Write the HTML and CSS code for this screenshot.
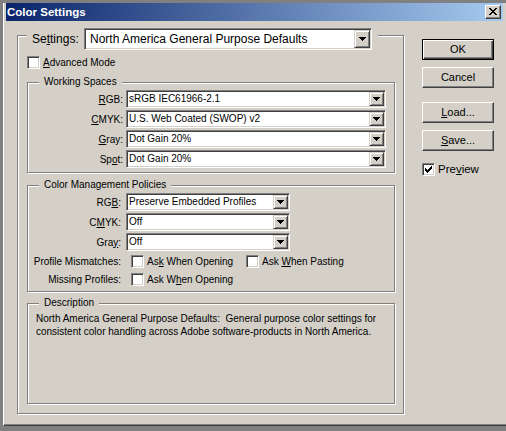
FILE: index.html
```html
<!DOCTYPE html>
<html>
<head>
<meta charset="utf-8">
<title>Color Settings</title>
<link rel="stylesheet" href="styles.css">
</head>
<body>
<div class="window">
  <div class="titlebar">
    <span class="title">Color Settings</span>
    <span class="close"><svg width="8" height="7" viewBox="0 0 8 7" shape-rendering="crispEdges"><path d="M0 0h2v1h-2zM6 0h2v1h-2zM1 1h2v1h-2zM5 1h2v1h-2zM2 2h4v1h-4zM3 3h2v1h-2zM2 4h4v1h-4zM1 5h2v1h-2zM5 5h2v1h-2zM0 6h2v1h-2zM6 6h2v1h-2z" fill="#000"/></svg></span>
  </div>
  <div class="client">
    <div class="group main">
      <div class="legend settings-legend">
        <span class="big-label">Se<u>t</u>tings:</span>
        <div class="combo combo-big">
          <span class="val">North America General Purpose Defaults</span>
          <span class="arrow"><svg width="7" height="4" viewBox="0 0 7 4" shape-rendering="crispEdges"><path d="M0 0h7v1h-7zM1 1h5v1h-5zM2 2h3v1h-3zM3 3h1v1h-1z" fill="#000"/></svg></span>
        </div>
      </div>

      <div class="check-row adv">
        <span class="cb"></span>
        <span class="cb-text"><u>A</u>dvanced Mode</span>
      </div>

      <div class="group ws">
        <div class="legend">Working Spaces</div>
        <div class="row">
          <span class="lbl"><u>R</u>GB:</span>
          <div class="combo"><span class="val">sRGB IEC61966-2.1</span><span class="arrow"><svg width="7" height="4" viewBox="0 0 7 4" shape-rendering="crispEdges"><path d="M0 0h7v1h-7zM1 1h5v1h-5zM2 2h3v1h-3zM3 3h1v1h-1z" fill="#000"/></svg></span></div>
        </div>
        <div class="row">
          <span class="lbl"><u>C</u>MYK:</span>
          <div class="combo"><span class="val">U.S. Web Coated (SWOP) v2</span><span class="arrow"><svg width="7" height="4" viewBox="0 0 7 4" shape-rendering="crispEdges"><path d="M0 0h7v1h-7zM1 1h5v1h-5zM2 2h3v1h-3zM3 3h1v1h-1z" fill="#000"/></svg></span></div>
        </div>
        <div class="row">
          <span class="lbl"><u>G</u>ray:</span>
          <div class="combo"><span class="val">Dot Gain 20%</span><span class="arrow"><svg width="7" height="4" viewBox="0 0 7 4" shape-rendering="crispEdges"><path d="M0 0h7v1h-7zM1 1h5v1h-5zM2 2h3v1h-3zM3 3h1v1h-1z" fill="#000"/></svg></span></div>
        </div>
        <div class="row">
          <span class="lbl">Sp<u>o</u>t:</span>
          <div class="combo"><span class="val">Dot Gain 20%</span><span class="arrow"><svg width="7" height="4" viewBox="0 0 7 4" shape-rendering="crispEdges"><path d="M0 0h7v1h-7zM1 1h5v1h-5zM2 2h3v1h-3zM3 3h1v1h-1z" fill="#000"/></svg></span></div>
        </div>
      </div>

      <div class="group cmp">
        <div class="legend">Color Management Policies</div>
        <div class="row">
          <span class="lbl">RG<u>B</u>:</span>
          <div class="combo"><span class="val">Preserve Embedded Profiles</span><span class="arrow"><svg width="7" height="4" viewBox="0 0 7 4" shape-rendering="crispEdges"><path d="M0 0h7v1h-7zM1 1h5v1h-5zM2 2h3v1h-3zM3 3h1v1h-1z" fill="#000"/></svg></span></div>
        </div>
        <div class="row">
          <span class="lbl">C<u>M</u>YK:</span>
          <div class="combo"><span class="val">Off</span><span class="arrow"><svg width="7" height="4" viewBox="0 0 7 4" shape-rendering="crispEdges"><path d="M0 0h7v1h-7zM1 1h5v1h-5zM2 2h3v1h-3zM3 3h1v1h-1z" fill="#000"/></svg></span></div>
        </div>
        <div class="row">
          <span class="lbl">Gra<u>y</u>:</span>
          <div class="combo"><span class="val">Off</span><span class="arrow"><svg width="7" height="4" viewBox="0 0 7 4" shape-rendering="crispEdges"><path d="M0 0h7v1h-7zM1 1h5v1h-5zM2 2h3v1h-3zM3 3h1v1h-1z" fill="#000"/></svg></span></div>
        </div>
        <div class="row check-line first-check">
          <span class="lbl">Profile Mismatches:</span>
          <span class="opt opt-first"><span class="cb"></span><span class="cb-text">As<u>k</u> When Opening</span></span>
          <span class="opt"><span class="cb"></span><span class="cb-text">Ask <u>W</u>hen Pasting</span></span>
        </div>
        <div class="row check-line">
          <span class="lbl">Missing Profiles:</span>
          <span class="opt"><span class="cb"></span><span class="cb-text">Ask W<u>h</u>en Opening</span></span>
        </div>
      </div>

      <div class="group desc">
        <div class="legend">Description</div>
        <p class="desc-text">North America General Purpose Defaults:&nbsp; General purpose color settings for<br>consistent color handling across Adobe software-products in North America.</p>
      </div>
    </div>

    <div class="side">
      <div class="btn btn-default">OK</div>
      <div class="btn btn-cancel">Cancel</div>
      <div class="btn btn-load"><span><u>L</u>oad...</span></div>
      <div class="btn btn-save"><span><u>S</u>ave...</span></div>
      <div class="check-row preview">
        <span class="cb checked"><svg width="7" height="7" viewBox="0 0 7 7" shape-rendering="crispEdges"><path d="M6 0h1v1h-1zM5 1h2v1h-2zM0 2h1v1h-1zM4 2h3v1h-3zM0 3h2v1h-2zM3 3h3v1h-3zM0 4h5v1h-5zM1 5h3v1h-3zM2 6h1v1h-1z" fill="#000"/></svg></span>
        <span class="cb-text big-text">Pre<u>v</u>iew</span>
      </div>
    </div>
  </div>
</div>
</body>
</html>
```

FILE: styles.css
```css
html, body {
  margin: 0;
  padding: 0;
}

body {
  background: #808080;
  font-family: "Liberation Sans", Arial, sans-serif;
  font-size: 10px;
  color: #000;
  width: 506px;
  height: 431px;
  overflow: hidden;
}

u {
  text-decoration: underline;
  text-underline-offset: 1px;
}

.window {
  box-sizing: border-box;
  margin-left: 3px;
  width: 503px;
  height: 423px;
  background: #d4d0c8;
  border-left: 1px solid #ffffff;
  border-bottom: 1px solid #404040;
  box-shadow: inset 0 -1px 0 #808080;
}

.titlebar {
  box-sizing: border-box;
  margin: 3px 3px 0 2px;
  height: 18px;
  background: linear-gradient(to right, #0a246a, #a6caf0);
  display: flex;
  align-items: center;
  justify-content: space-between;
  padding: 0 2px 0 1px;
}

.title {
  color: #ffffff;
  font-weight: bold;
  font-size: 11.5px;
  line-height: 14px;
}

.close {
  box-sizing: border-box;
  width: 16px;
  height: 14px;
  background: #d4d0c8;
  border: 1px solid;
  border-color: #ffffff #404040 #404040 #ffffff;
  box-shadow: inset -1px -1px 0 #808080;
  display: flex;
  align-items: center;
  justify-content: center;
  padding: 0 1px 1px 0;
}

.close svg {
  display: block;
}

.client {
  display: flex;
  align-items: flex-start;
  padding: 14px 0 0 13px;
}

/* etched group boxes */
.group {
  position: relative;
  box-sizing: border-box;
  border: 1px solid #808080;
  box-shadow: inset 1px 1px 0 #ffffff, 1px 1px 0 #ffffff;
}

.legend {
  position: absolute;
  top: -7px;
  left: 11px;
  padding: 0 5px;
  line-height: 12px;
  background: #d4d0c8;
  white-space: nowrap;
}

.main {
  width: 387px;
  height: 379px;
  padding: 20px 8px 9px 9px;
  display: flex;
  flex-direction: column;
}

.settings-legend {
  top: -8px;
  left: 9px;
  padding: 0 6px 0 5px;
  display: flex;
  align-items: center;
  height: 22px;
}

.big-label {
  font-size: 12px;
  width: 52px;
  line-height: 14px;
}

/* combo boxes */
.combo {
  box-sizing: border-box;
  height: 18px;
  background: #ffffff;
  border: 1px solid;
  border-color: #808080 #ffffff #ffffff #808080;
  box-shadow: inset 1px 1px 0 #404040, inset -1px -1px 0 #d4d0c8;
  padding: 1px;
  display: flex;
  align-items: stretch;
}

.combo .val {
  flex: 1;
  padding-left: 1px;
  line-height: 14px;
  white-space: nowrap;
  overflow: hidden;
}

.combo .arrow {
  box-sizing: border-box;
  width: 15px;
  background: #d4d0c8;
  border: 1px solid;
  border-color: #d4d0c8 #404040 #404040 #d4d0c8;
  box-shadow: inset 1px 1px 0 #ffffff, inset -1px -1px 0 #808080;
  display: flex;
  align-items: center;
  justify-content: center;
}

.combo .arrow svg {
  display: block;
}

.combo-big {
  width: 288px;
  height: 22px;
  font-size: 12px;
}

.combo-big .val {
  padding-left: 4px;
  line-height: 18px;
}

.combo-big .arrow {
  width: 16px;
}

/* checkboxes */
.check-row {
  display: flex;
  align-items: center;
  height: 13px;
}

.cb {
  box-sizing: border-box;
  flex: none;
  width: 13px;
  height: 13px;
  background: #ffffff;
  border: 1px solid;
  border-color: #808080 #ffffff #ffffff #808080;
  box-shadow: inset 1px 1px 0 #404040, inset -1px -1px 0 #d4d0c8;
  display: flex;
  padding: 2px 0 0 2px;
}

.cb svg {
  display: block;
}

.cb-text {
  margin-left: 3px;
  line-height: 13px;
  white-space: nowrap;
}

.adv {
  margin-bottom: 13px;
}

/* rows */
.row {
  display: flex;
  align-items: center;
  height: 18px;
}

.lbl {
  text-align: right;
  white-space: nowrap;
}

.ws {
  height: 91px;
  padding-top: 7px;
  display: flex;
  flex-direction: column;
  gap: 2px;
  margin-bottom: 12px;
}

.ws .lbl {
  width: 95px;
  margin-right: 3px;
}

.ws .combo {
  width: 260px;
}

.cmp {
  height: 107px;
  padding-top: 7px;
  display: flex;
  flex-direction: column;
  gap: 2px;
  margin-bottom: 11px;
}

.cmp .lbl {
  width: 93px;
  margin-right: 5px;
}

.cmp .combo {
  width: 164px;
}

.cmp .check-line {
  margin-top: -2px;
}

.cmp .first-check {
  margin-top: -1px;
}

.cmp .check-line .lbl {
  margin-right: 10px;
}

.opt {
  display: flex;
  align-items: center;
}

.opt-first {
  width: 115px;
}

.desc {
  height: 101px;
  padding: 8px 8px 0 8px;
}

.desc-text {
  margin: 0;
  line-height: 13px;
  white-space: nowrap;
}

/* side buttons */
.side {
  display: flex;
  flex-direction: column;
  margin-left: 18px;
  margin-top: 4px;
}

.btn {
  box-sizing: border-box;
  width: 72px;
  height: 21px;
  background: #d4d0c8;
  border: 1px solid;
  border-color: #ffffff #404040 #404040 #ffffff;
  box-shadow: inset -1px -1px 0 #808080;
  display: flex;
  align-items: center;
  justify-content: center;
  font-size: 11px;
  line-height: 13px;
  padding-bottom: 1px;
}

.btn-default {
  border-color: #000000;
  box-shadow: inset 1px 1px 0 #ffffff, inset -1px -1px 0 #404040, inset -2px -2px 0 #808080;
}

.btn-cancel {
  margin-top: 7px;
}

.btn-load {
  margin-top: 14px;
}

.btn-save {
  margin-top: 7px;
}

.preview {
  margin-top: 12px;
}

.big-text {
  font-size: 11.5px;
}
```
